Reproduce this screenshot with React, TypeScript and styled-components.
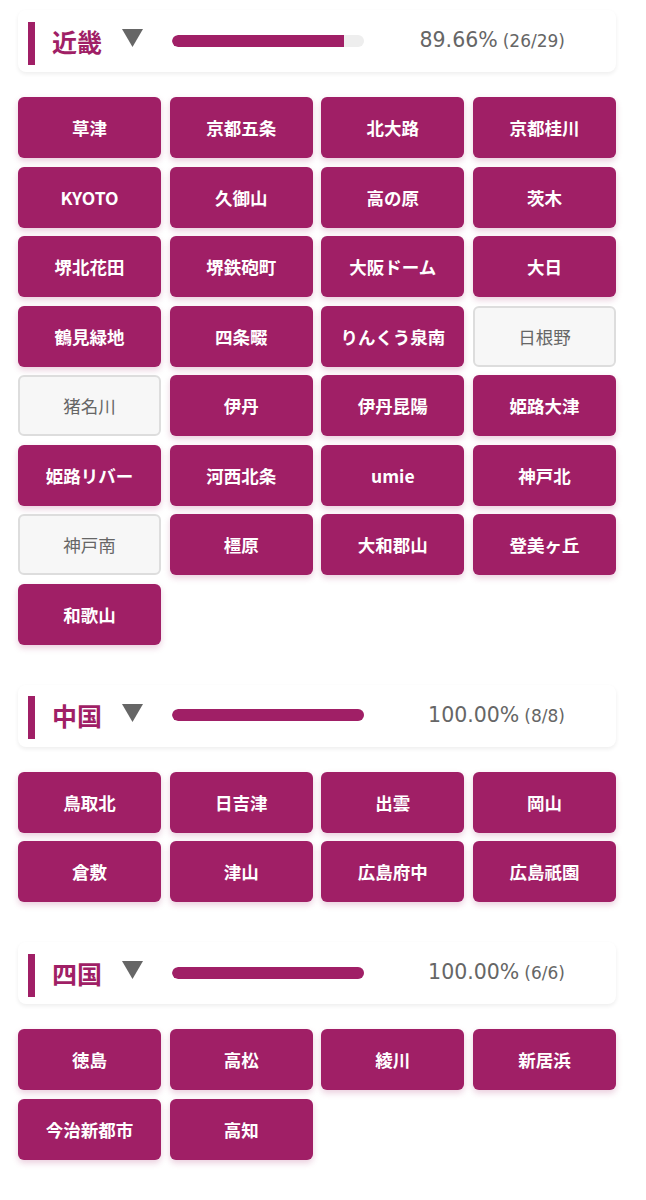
import React from "react";
import styled, { createGlobalStyle } from "styled-components";

const GlobalStyle = createGlobalStyle`
  html, body { margin: 0; padding: 0; background: #ffffff; }
  body { font-family: "Noto Sans CJK JP", "Noto Sans", sans-serif; }
`;

const ACCENT = "#a01f66";

const Page = styled.div`
  padding: 10px 30px 40px 18px;
  display: flex;
  flex-direction: column;
  gap: 40px;
`;

const Section = styled.section`
  display: flex;
  flex-direction: column;
  gap: 25px;
`;

const HeaderCard = styled.div`
  height: 62px;
  box-sizing: border-box;
  background: #fff;
  border-radius: 8px;
  box-shadow: 0 2px 4px rgba(0, 0, 0, 0.07);
  display: flex;
  align-items: center;
  padding: 0 51px 0 10px;
`;

const AccentBar = styled.div`
  flex-shrink: 0;
  width: 7px;
  height: 43px;
  background: ${ACCENT};
  margin-right: 17px;
  margin-top: 4px;
`;

const Title = styled.h2`
  margin: 0;
  font-size: 25px;
  font-weight: 700;
  color: ${ACCENT};
  line-height: 1;
  margin-right: 20px;
  flex-shrink: 0;
`;

const Toggle = styled.svg`
  flex-shrink: 0;
  width: 21px;
  height: 18px;
  margin-right: 29px;
  margin-top: -6px;
`;

const Track = styled.div`
  flex-shrink: 0;
  width: 192px;
  height: 12px;
  border-radius: 6px;
  background: #eeeeee;
  overflow: hidden;
  margin-top: -1px;
`;

const Fill = styled.div`
  height: 100%;
  background: ${ACCENT};
  border-radius: 6px 0 0 6px;
`;

const Stats = styled.div`
  flex: 1;
  text-align: right;
  color: #666;
  font-family: "DejaVu Sans", sans-serif;
  font-weight: 400;
  font-size: 20.5px;
  margin-top: -2px;
  white-space: nowrap;
`;

const Count = styled.span`
  font-size: 17px;
  margin-left: 5px;
`;

const Grid = styled.div`
  display: grid;
  grid-template-columns: repeat(4, 1fr);
  column-gap: 8.67px;
  row-gap: 8.5px;
`;

const Station = styled.button<{ $done: boolean }>`
  height: 61px;
  border-radius: 6px;
  font-family: "Noto Sans CJK JP", "Noto Sans", sans-serif;
  font-size: 17.5px;
  cursor: pointer;
  padding: 0;
  background: ${(p) => (p.$done ? ACCENT : "#f7f7f7")};
  color: ${(p) => (p.$done ? "#ffffff" : "#666666")};
  font-weight: ${(p) => (p.$done ? 700 : 400)};
  border: ${(p) => (p.$done ? "none" : "2px solid #dddddd")};
  box-shadow: ${(p) => (p.$done ? "0 3px 6px rgba(160, 31, 102, 0.22)" : "none")};
`;

type Region = {
  name: string;
  stations: [string, boolean][];
};

const regions: Region[] = [
  {
    name: "近畿",
    stations: [
      ["草津", true], ["京都五条", true], ["北大路", true], ["京都桂川", true],
      ["KYOTO", true], ["久御山", true], ["高の原", true], ["茨木", true],
      ["堺北花田", true], ["堺鉄砲町", true], ["大阪ドーム", true], ["大日", true],
      ["鶴見緑地", true], ["四条畷", true], ["りんくう泉南", true], ["日根野", false],
      ["猪名川", false], ["伊丹", true], ["伊丹昆陽", true], ["姫路大津", true],
      ["姫路リバー", true], ["河西北条", true], ["umie", true], ["神戸北", true],
      ["神戸南", false], ["橿原", true], ["大和郡山", true], ["登美ヶ丘", true],
      ["和歌山", true],
    ],
  },
  {
    name: "中国",
    stations: [
      ["鳥取北", true], ["日吉津", true], ["出雲", true], ["岡山", true],
      ["倉敷", true], ["津山", true], ["広島府中", true], ["広島祇園", true],
    ],
  },
  {
    name: "四国",
    stations: [
      ["徳島", true], ["高松", true], ["綾川", true], ["新居浜", true],
      ["今治新都市", true], ["高知", true],
    ],
  },
];

function RegionBlock({ region }: { region: Region }) {
  const total = region.stations.length;
  const done = region.stations.filter((s) => s[1]).length;
  const pct = (done / total) * 100;
  return (
    <Section>
      <HeaderCard>
        <AccentBar />
        <Title>{region.name}</Title>
        <Toggle viewBox="0 0 21 18">
          <polygon points="0,0 21,0 10.5,18" fill="#666666" />
        </Toggle>
        <Track>
          <Fill style={{ width: `${pct}%` }} />
        </Track>
        <Stats>
          {pct.toFixed(2)}%<Count>({done}/{total})</Count>
        </Stats>
      </HeaderCard>
      <Grid>
        {region.stations.map(([name, ok]) => (
          <Station key={name} $done={ok}>
            {name}
          </Station>
        ))}
      </Grid>
    </Section>
  );
}

export default function App() {
  return (
    <>
      <GlobalStyle />
      <Page>
        {regions.map((r) => (
          <RegionBlock key={r.name} region={r} />
        ))}
      </Page>
    </>
  );
}
